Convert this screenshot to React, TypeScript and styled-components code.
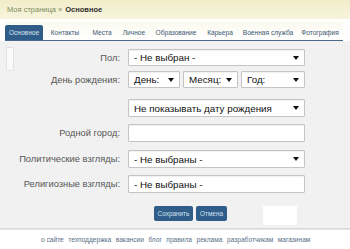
import styled, { createGlobalStyle } from 'styled-components';

const GlobalStyle = createGlobalStyle`
  html, body {
    margin: 0;
    padding: 0;
    background: #ffffff;
  }
  body {
    font-family: 'Liberation Sans', Arial, sans-serif;
  }
`;

const Page = styled.div`
  width: 350px;
  height: 249px;
  overflow: hidden;
  display: flex;
  flex-direction: column;
  background: #ffffff;
`;

const Header = styled.div`
  height: 19px;
  padding: 0 7px;
  display: flex;
  align-items: center;
  font-size: 7.5px;
  background: linear-gradient(#f1edc9, #f7f4de);
  color: #7d8a5c;
`;

const Crumb = styled.b`
  color: #2d2d2d;
  margin-left: 3px;
`;

const Tabs = styled.div`
  display: flex;
  align-items: flex-end;
  height: 18px;
  margin: 3px 7px 0 5px;
  border-bottom: 1px solid #4b6a8b;
  background: linear-gradient(#fbfaf0, #ffffff);
`;

const Tab = styled.div<{ $active?: boolean; $w: number }>`
  width: ${(p) => p.$w}px;
  height: 15px;
  display: flex;
  align-items: center;
  justify-content: center;
  font-size: 6.6px;
  border-radius: 2px 2px 0 0;
  color: ${(p) => (p.$active ? '#d8e6f3' : '#3d5873')};
  background: ${(p) => (p.$active ? '#2f5c88' : 'transparent')};
  white-space: nowrap;
`;

const Panel = styled.div`
  flex: 1;
  display: flex;
  background: #f1f1f1;
  border-bottom: 1px solid #d8d8d8;
`;

const LeftStrip = styled.div`
  width: 6px;
  height: 22px;
  margin: 6px 0 0 6px;
  background: #fafafa;
  border: 1px solid #e2e2e2;
  border-radius: 1px;
`;

const Form = styled.div`
  display: flex;
  flex-direction: column;
  padding-top: 8px;
`;

const Row = styled.div<{ $h: number; $mb: number }>`
  display: flex;
  align-items: center;
  height: ${(p) => p.$h}px;
  margin-bottom: ${(p) => p.$mb}px;
`;

const Label = styled.div`
  width: 106px;
  padding-right: 8px;
  text-align: right;
  font-size: 9.3px;
  color: #565656;
  white-space: nowrap;
`;

const Fields = styled.div`
  display: flex;
  gap: 3px;
  height: 100%;
`;

const Box = styled.div<{ $w: number }>`
  width: ${(p) => p.$w}px;
  height: 100%;
  box-sizing: border-box;
  display: flex;
  align-items: center;
  justify-content: space-between;
  padding: 0 5px 0 5px;
  background: #ffffff;
  border: 1px solid #c4c4c4;
  border-radius: 1px;
  box-shadow: inset 0 1px 1px rgba(0, 0, 0, 0.06);
  font-size: 9.8px;
  color: #111111;
  white-space: nowrap;
`;

const Arrow = styled.span`
  width: 0;
  height: 0;
  border-left: 3px solid transparent;
  border-right: 3px solid transparent;
  border-top: 4px solid #111111;
`;

const Buttons = styled.div`
  display: flex;
  align-items: flex-start;
  padding-left: 140px;
  margin-top: 13px;
`;

const Button = styled.div<{ $w: number }>`
  width: ${(p) => p.$w}px;
  height: 15px;
  margin-right: 3px;
  display: flex;
  align-items: center;
  justify-content: center;
  background: #2f5c88;
  border-radius: 2px;
  color: #d3e2f0;
  font-size: 6.4px;
`;

const Blank = styled.div`
  width: 34px;
  height: 19px;
  margin-left: 33px;
  background: #ffffff;
`;

const Footer = styled.div`
  height: 19px;
  display: flex;
  align-items: center;
  padding-left: 41px;
  gap: 4.5px;
  border-top: 1px solid #e6e6e6;
  font-size: 6.6px;
  color: #5a6f86;
`;

type Field = { text: string; w: number; arrow?: boolean };

const rows: { label: string; h: number; mb: number; fields: Field[] }[] = [
  { label: 'Пол:', h: 17, mb: 5, fields: [{ text: '- Не выбран -', w: 177, arrow: true }] },
  {
    label: 'День рождения:',
    h: 17,
    mb: 11,
    fields: [
      { text: 'День:', w: 52, arrow: true },
      { text: 'Месяц:', w: 55, arrow: true },
      { text: 'Год:', w: 64, arrow: true },
    ],
  },
  { label: '', h: 18, mb: 7, fields: [{ text: 'Не показывать дату рождения', w: 177, arrow: true }] },
  { label: 'Родной город:', h: 18, mb: 8, fields: [{ text: '', w: 177 }] },
  { label: 'Политические взгляды:', h: 18, mb: 7, fields: [{ text: '- Не выбраны -', w: 177, arrow: true }] },
  { label: 'Религиозные взгляды:', h: 18, mb: 0, fields: [{ text: '- Не выбраны -', w: 177 }] },
];

const tabs: [string, number][] = [
  ['Основное', 38],
  ['Контакты', 44],
  ['Места', 30],
  ['Личное', 34],
  ['Образование', 50],
  ['Карьера', 38],
  ['Военная служба', 58],
  ['Фотография', 46],
];

const links = ['о сайте', 'техподдержка', 'вакансии', 'блог', 'правила', 'реклама', 'разработчикам', 'магазинам'];

export default function App() {
  return (
    <Page>
      <GlobalStyle />
      <Header>
        Моя страница » <Crumb>Основное</Crumb>
      </Header>
      <Tabs>
        {tabs.map(([name, w], i) => (
          <Tab key={name} $w={w} $active={i === 0}>
            {name}
          </Tab>
        ))}
      </Tabs>
      <Panel>
        <LeftStrip />
        <Form>
          {rows.map((r, i) => (
            <Row key={i} $h={r.h} $mb={r.mb}>
              <Label>{r.label}</Label>
              <Fields>
                {r.fields.map((f, j) => (
                  <Box key={j} $w={f.w}>
                    <span>{f.text}</span>
                    {f.arrow && <Arrow />}
                  </Box>
                ))}
              </Fields>
            </Row>
          ))}
          <Buttons>
            <Button $w={39}>Сохранить</Button>
            <Button $w={31}>Отмена</Button>
            <Blank />
          </Buttons>
        </Form>
      </Panel>
      <Footer>
        {links.map((l) => (
          <span key={l}>{l}</span>
        ))}
      </Footer>
    </Page>
  );
}
